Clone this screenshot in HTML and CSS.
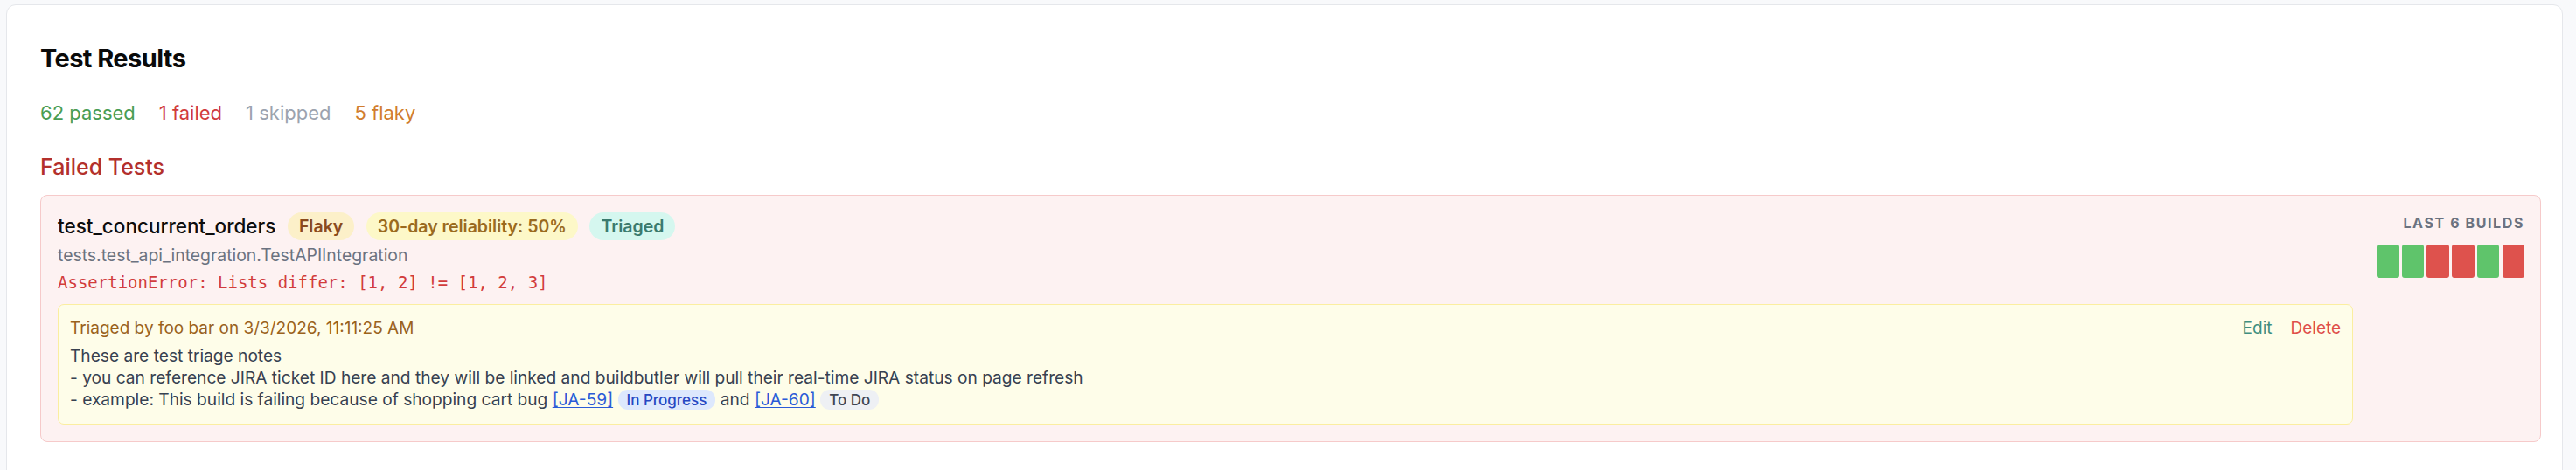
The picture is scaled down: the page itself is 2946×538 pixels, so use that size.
FILE: index.html
```html
<!DOCTYPE html>
<html lang="en">
<head>
<meta charset="utf-8">
<title>Test Results</title>
<link rel="stylesheet" href="styles.css">
</head>
<body>
<main class="panel">
  <h2 class="title">Test Results</h2>
  <div class="stats">
    <span class="stat stat-passed">62 passed</span>
    <span class="stat stat-failed">1 failed</span>
    <span class="stat stat-skipped">1 skipped</span>
    <span class="stat stat-flaky">5 flaky</span>
  </div>
  <h3 class="section-title">Failed Tests</h3>
  <div class="fail-card">
    <div class="fail-main">
      <div class="name-row">
        <span class="test-name">test_concurrent_orders</span>
        <span class="badge badge-flaky">Flaky</span>
        <span class="badge badge-rel">30-day reliability: 50%</span>
        <span class="badge badge-triaged">Triaged</span>
      </div>
      <div class="class-name">tests.test_api_integration.TestAPIIntegration</div>
      <div class="error">AssertionError: Lists differ: [1, 2] != [1, 2, 3]</div>
      <div class="triage">
        <div class="triage-head">
          <span class="triage-by">Triaged by foo bar on 3/3/2026, 11:11:25 AM</span>
          <span class="triage-actions">
            <span class="act act-edit">Edit</span>
            <span class="act act-delete">Delete</span>
          </span>
        </div>
        <div class="notes">
          <div>These are test triage notes</div>
          <div>- you can reference JIRA ticket ID here and they will be linked and buildbutler will pull their real-time JIRA status on page refresh</div>
          <div>- example: This build is failing because of shopping cart bug <a class="jira" href="#">[JA-59]</a> <span class="pill pill-progress">In Progress</span> and <a class="jira" href="#">[JA-60]</a> <span class="pill pill-todo">To Do</span></div>
        </div>
      </div>
    </div>
    <div class="builds">
      <div class="builds-label">Last 6 builds</div>
      <div class="build-bars">
        <span class="bar bar-pass"></span>
        <span class="bar bar-pass"></span>
        <span class="bar bar-fail"></span>
        <span class="bar bar-fail"></span>
        <span class="bar bar-pass"></span>
        <span class="bar bar-fail"></span>
      </div>
    </div>
  </div>
</main>
</body>
</html>
```
FILE: styles.css
```css
* { box-sizing: border-box; }
html, body { margin: 0; height: 100%; }
body {
  background: #f8f9fb;
  padding: 5px 15px 0 7px;
  font-family: Inter, "Noto Sans", sans-serif;
  color: #111;
  overflow: hidden;
}
.panel {
  background: #fff;
  border: 1px solid #e5e7eb;
  border-radius: 11px;
  padding: 43px 24px 60px 38px;
  min-height: 560px;
}
.title {
  margin: 0;
  font-size: 29px;
  line-height: 36px;
  font-weight: 700;
  letter-spacing: -0.02em;
  color: #0a0a0a;
}
.stats {
  margin-top: 29px;
  display: flex;
  gap: 27px;
  font-size: 22px;
  line-height: 30px;
}
.stat-passed { color: #4a9d54; }
.stat-failed { color: #d13b3b; }
.stat-skipped { color: #9ca3af; }
.stat-flaky { color: #d17d2e; }
.section-title {
  margin: 31px 0 0;
  font-size: 25px;
  line-height: 32px;
  font-weight: 500;
  color: #b3302c;
}
.fail-card {
  margin-top: 16px;
  display: flex;
  gap: 27px;
  background: #fdf2f2;
  border: 1px solid #f6caca;
  border-radius: 8px;
  padding: 19px 18px 19px 19px;
}
.fail-main { flex: 1; min-width: 0; }
.name-row {
  display: flex;
  align-items: center;
  gap: 13.5px;
  height: 32px;
}
.test-name {
  font-size: 22.5px;
  font-weight: 500;
  color: #0d0d0d;
  line-height: 32px;
}
.badge {
  height: 32px;
  line-height: 32px;
  padding: 0 13px;
  border-radius: 16px;
  font-size: 19.5px;
  font-weight: 600;
}
.badge-flaky { background: #fcf0c9; color: #8a4a1c; }
.badge-rel { background: #fdf8c8; color: #9a6a1e; }
.badge-triaged { background: #d5f7ef; color: #3b7a6d; }
.class-name {
  margin-top: 4.5px;
  font-size: 19.4px;
  line-height: 24px;
  color: #6b7280;
}
.error {
  margin-top: 7px;
  font-family: "DejaVu Sans Mono", "Liberation Mono", monospace;
  font-size: 19px;
  line-height: 24px;
  color: #d23c3c;
}
.triage {
  margin-top: 13.5px;
  background: #fefde9;
  border: 1px solid #fbeea0;
  border-radius: 7px;
  padding: 14px 13px 13px 13px;
  font-size: 19px;
}
.triage-head {
  display: flex;
  justify-content: space-between;
  line-height: 25px;
}
.triage-by { color: #9a621c; }
.triage-actions { display: flex; gap: 21px; }
.act-edit { color: #3e8e80; }
.act-delete { color: #df4f4a; }
.notes {
  margin-top: 6.6px;
  font-size: 19.15px;
  line-height: 25.33px;
  color: #374151;
}
.jira { color: #2b5bd7; text-decoration: underline; text-underline-offset: 2px; }
.pill {
  font-size: 17px;
  font-weight: 500;
  padding: 2px 10px 1px;
  border-radius: 11px;
}
.pill-progress { background: #dde8fd; color: #2647c2; }
.pill-todo { background: #eef0f4; color: #3f4653; }
.builds {
  display: flex;
  flex-direction: column;
  align-items: flex-end;
}
.builds-label {
  font-size: 16px;
  line-height: 24px;
  font-weight: 700;
  letter-spacing: 0.1em;
  text-transform: uppercase;
  color: #6b7280;
}
.build-bars {
  margin-top: 13px;
  display: flex;
  gap: 3.2px;
}
.bar {
  width: 25.5px;
  height: 38px;
  border-radius: 3px;
}
.bar-pass { background: #5fc46b; }
.bar-fail { background: #de524d; }
```
